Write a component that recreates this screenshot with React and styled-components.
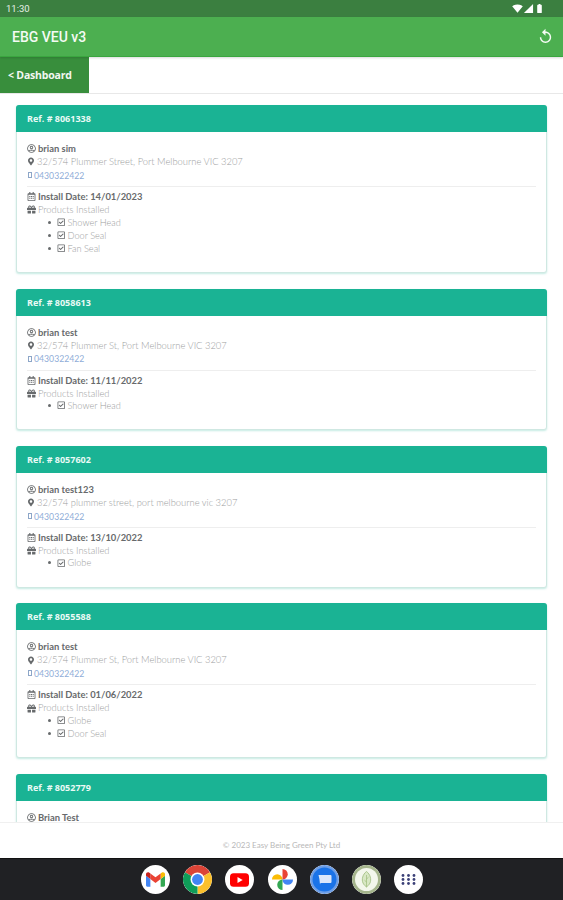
import React from "react";
import styled, { createGlobalStyle } from "styled-components";
import { FaRegUserCircle, FaMapMarkerAlt, FaRegCalendarAlt, FaGift, FaRegCheckSquare } from "react-icons/fa";
import { MdReplay, MdSignalWifi4Bar, MdSignalCellular4Bar, MdBatteryFull } from "react-icons/md";

const Global = createGlobalStyle`
  html, body { margin: 0; padding: 0; background: #fff; }
  * { box-sizing: border-box; }
`;

const Screen = styled.div`
  width: 563px; height: 900px; display: flex; flex-direction: column; overflow: hidden;
  font-family: "Lato", "Open Sans", sans-serif; background: #fff;
`;
const StatusBar = styled.div`
  height: 17px; flex: none; background: #3b7f40; color: #e6f0e6; display: flex; align-items: center;
  justify-content: space-between; padding: 0 18px 0 6px; font: 9.5px Roboto, sans-serif;
`;
const StatusIcons = styled.div`display: flex; align-items: center; font-size: 11px; color: #fff;`;
const AppBar = styled.div`
  height: 40px; flex: none; background: #4caf50; border-bottom: 1px solid #3aa63f; color: #f4fbf4;
  display: flex; align-items: center; justify-content: space-between; padding: 0 9px 0 12px;
  font: 500 14px Roboto, sans-serif; box-shadow: 0 1px 2px rgba(0,0,0,.15); position: relative;
`;
const NavRow = styled.div`height: 37px; flex: none; border-bottom: 1px solid #e8e8e8; display: flex;`;
const NavButton = styled.div`
  width: 89px; background: #388e3c; color: #f2f7f2; display: flex; align-items: center;
  padding-left: 8px; font-size: 10.5px; font-weight: 700; font-family: "Open Sans", sans-serif; letter-spacing: -.2px;
`;
const Content = styled.div`
  flex: 1; min-height: 0; overflow: hidden; padding: 11px 16px 0; display: flex; flex-direction: column; gap: 15.6px;
`;
const Card = styled.div`
  flex: none; border: 1px solid #cfe8e2; border-radius: 3px; box-shadow: 0 1px 2px rgba(26,180,148,.25); background: #fff;
`;
const CardHeader = styled.div`
  height: 27px; background: #1ab394; margin: -1px -1px 0; border-radius: 3px 3px 0 0; color: #eafaf6;
  display: flex; align-items: center; padding-left: 11px; font-size: 9px; font-weight: 700;
  font-family: "Open Sans", sans-serif;
`;
const CardBody = styled.div`padding: 10px 10px 16px;`;
const Line = styled.div`
  height: 13.3px; line-height: 13.3px; font-size: 9.4px; display: flex; align-items: center; gap: 2px;
  color: ${(p) => (p.$strong ? "#676a6c" : "#9c9ea0")}; font-weight: ${(p) => (p.$strong ? 700 : 300)};
  white-space: nowrap;
  svg { color: #676a6c; flex: none; font-size: 9px; }
`;
const Marker = styled(FaMapMarkerAlt)`width: 6px; margin: 0 1px 0 1px;`;
const Phone = styled.span`color: #8fadd8; font-weight: 400; font-size: 8.7px;`;
const Tofu = styled.span`width: 4px; height: 6px; border: 1px solid #8da6c8; flex: none; margin-left: 1px;`;
const Divider = styled.hr`border: 0; border-top: 1px solid #eeeeee; margin: 4px 0 3px;`;
const Items = styled.ul`list-style: none; margin: -1px 0 1px; padding: 0 0 0 21px;`;
const Item = styled.li`
  display: flex; align-items: center; height: 13.2px; font-size: 9.2px; font-weight: 300; color: #9c9ea0; gap: 2px;
  svg { color: #676a6c; font-size: 8.5px; flex: none; }
  &::before { content: ""; width: 3px; height: 3px; border-radius: 50%; background: #676a6c; margin-right: 4px; flex: none; }
`;
const Footer = styled.div`
  height: 36px; flex: none; border-top: 1px solid #f0f0f0; background: #fff; display: flex; align-items: center;
  justify-content: center; color: #b8b8b8; font-size: 8px; padding-top: 8px;
`;
const Dock = styled.div`
  height: 42px; flex: none; background: #202124; display: flex; align-items: center; justify-content: center; gap: 13.1px;
  border-top: 1px solid #111; padding-left: 1px;
`;
const DockIcon = styled.div`
  width: 29px; height: 29px; border-radius: 50%; background: #fff; display: flex; align-items: center;
  justify-content: center; overflow: hidden; flex: none;
`;

const cards = [
  { ref: "8061338", name: "brian sim", addr: "32/574 Plummer Street, Port Melbourne VIC 3207", date: "14/01/2023", items: ["Shower Head", "Door Seal", "Fan Seal"] },
  { ref: "8058613", name: "brian test", addr: "32/574 Plummer St, Port Melbourne VIC 3207", date: "11/11/2022", items: ["Shower Head"] },
  { ref: "8057602", name: "brian test123", addr: "32/574 plummer street, port melbourne vic 3207", date: "13/10/2022", items: ["Globe"] },
  { ref: "8055588", name: "brian test", addr: "32/574 Plummer St, Port Melbourne VIC 3207", date: "01/06/2022", items: ["Globe", "Door Seal"] },
  { ref: "8052779", name: "Brian Test" },
];

const Gmail = () => (
  <svg width="19" height="15" viewBox="0 0 24 18">
    <path d="M1.6 18H5.5V8.5L0 4.4V16.4C0 17.3.7 18 1.6 18Z" fill="#4285f4" />
    <path d="M18.5 18h3.9c.9 0 1.6-.7 1.6-1.6V4.4l-5.5 4.1Z" fill="#34a853" />
    <path d="M18.5 1.400v7.100L24 4.400V2.200C24 .2 21.700-1 20.100.2Z" fill="#fbbc04" />
    <path d="M5.500 8.500V1.400L12 6.300l6.500-4.900v7.100L12 13.400Z" fill="#ea4335" />
    <path d="M0 2.200v2.200l5.500 4.100V1.400L3.900.2C2.300-1 0 .2 0 2.200Z" fill="#c5221f" />
  </svg>
);
const Chrome = () => (
  <svg width="29" height="29" viewBox="0 0 48 48">
    <path d="M24 24L3.200 12A24 24 0 0 1 44.800 12Z" fill="#db4437" />
    <path d="M24 24L44.800 12A24 24 0 0 1 24 48Z" fill="#fbc02d" />
    <path d="M24 24L24 48A24 24 0 0 1 3.200 12Z" fill="#0f9d58" />
    <circle cx="24" cy="24" r="11.500" fill="#fff" />
    <circle cx="24" cy="24" r="9" fill="#4285f4" />
  </svg>
);
const YouTube = () => (
  <svg width="19" height="14" viewBox="0 0 24 17">
    <rect width="24" height="17" rx="4.500" fill="#f00" />
    <path d="M9.500 4.800v7.400L16 8.500Z" fill="#fff" />
  </svg>
);
const Photos = () => (
  <svg width="23" height="23" viewBox="0 0 24 24">
    <path d="M1 12a5.500 5.500 0 0 1 11 0Z" fill="#fbbc04" />
    <path d="M12 1a5.500 5.500 0 0 1 0 11Z" fill="#ea4335" />
    <path d="M23 12a5.500 5.500 0 0 1-11 0Z" fill="#4285f4" />
    <path d="M12 23a5.500 5.500 0 0 1 0-11Z" fill="#34a853" />
  </svg>
);
const Messages = () => (
  <svg width="29" height="29" viewBox="0 0 29 29">
    <circle cx="14.500" cy="14.500" r="14.500" fill="#6f9fe6" />
    <circle cx="14.500" cy="14.500" r="12" fill="#1a73e8" />
    <path d="M8.500 10h12a1 1 0 0 1 1 1v6a1 1 0 0 1-1 1H10.500L10 19.500 9.400 14Z" fill="#dbe7fb" />
  </svg>
);
const Leaf = () => (
  <svg width="29" height="29" viewBox="0 0 29 29">
    <circle cx="14.500" cy="14.500" r="14.500" fill="#a5b58c" />
    <circle cx="14.500" cy="14.500" r="11.500" fill="#f3f7ec" />
    <path d="M14.500 6.500c4 3 5 8 3.500 11.500-1 2-2.300 3-3.500 4-1.200-1-2.500-2-3.500-4-1.500-3.500-.5-8.500 3.500-11.500Z" fill="#d8e8c4" stroke="#9dbb7c" strokeWidth=".8" />
    <path d="M14.500 10v12M14.500 14l2-1.800M14.500 17l-2-1.800" stroke="#9dbb7c" strokeWidth=".7" fill="none" />
  </svg>
);
const Apps = () => (
  <svg width="15" height="11" viewBox="0 0 15 11" fill="#3c4178">
    {[1.5, 5.5, 9.5].flatMap((y) => [2, 7.5, 13].map((x) => <circle key={`${x}-${y}`} cx={x} cy={y} r="1.400" />))}
  </svg>
);

export default function App() {
  return (
    <Screen>
      <Global />
      <StatusBar>
        <span>11:30</span>
        <StatusIcons><MdSignalWifi4Bar /><MdSignalCellular4Bar /><MdBatteryFull /></StatusIcons>
      </StatusBar>
      <AppBar>
        <span>EBG VEU v3</span>
        <MdReplay size={17} />
      </AppBar>
      <NavRow><NavButton>&lt; Dashboard</NavButton></NavRow>
      <Content>
        {cards.map((c) => (
          <Card key={c.ref}>
            <CardHeader>Ref. # {c.ref}</CardHeader>
            <CardBody>
              <Line $strong><FaRegUserCircle />{c.name}</Line>
              {c.addr && (
                <>
                  <Line><Marker />{c.addr}</Line>
                  <Line><Tofu /><Phone>0430322422</Phone></Line>
                  <Divider />
                  <Line $strong><FaRegCalendarAlt />Install Date: {c.date}</Line>
                  <Line><FaGift />Products Installed</Line>
                  <Items>
                    {c.items.map((i) => <Item key={i}><FaRegCheckSquare />{i}</Item>)}
                  </Items>
                </>
              )}
            </CardBody>
          </Card>
        ))}
      </Content>
      <Footer>© 2023 Easy Being Green Pty Ltd</Footer>
      <Dock>
        <DockIcon><Gmail /></DockIcon>
        <DockIcon><Chrome /></DockIcon>
        <DockIcon><YouTube /></DockIcon>
        <DockIcon><Photos /></DockIcon>
        <DockIcon><Messages /></DockIcon>
        <DockIcon><Leaf /></DockIcon>
        <DockIcon><Apps /></DockIcon>
      </Dock>
    </Screen>
  );
}
